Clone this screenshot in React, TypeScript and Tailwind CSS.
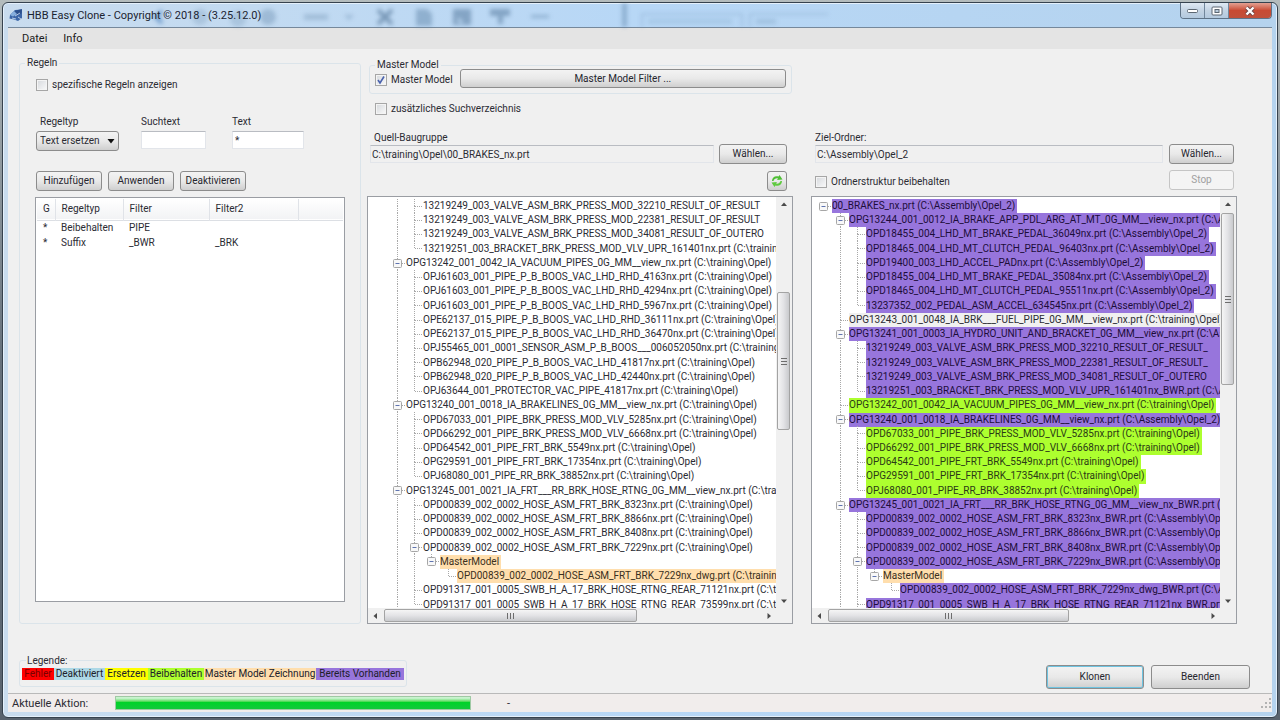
import React, { useState } from "react";

type Tone = "plain" | "purple" | "green" | "orange" | "gray";

/*
 * Guide characters, one per 17px indent cell:
 *   " " empty, "|" line passing through, "+" branch, "L" last branch,
 *   "B" expander with siblings below, "b" last expander, "r" root expander
 */
type Row = { guides: string; text: string; tone?: Tone; fill?: boolean };

const toneClass: Record<Tone, string> = {
  plain: "text-[#2b2b33]",
  purple: "bg-[#9775dc] text-[#1d0d3a]",
  green: "bg-[#adff2f] text-[#2b3a16]",
  orange: "bg-[#ffdead] text-[#3a2f20]",
  gray: "bg-[#f0f0f0] text-[#2b2b33]",
};

const sourceRows: Row[] = [
  { guides: "|+", text: "13219249_003_VALVE_ASM_BRK_PRESS_MOD_32210_RESULT_OF_RESULT" },
  { guides: "|+", text: "13219249_003_VALVE_ASM_BRK_PRESS_MOD_22381_RESULT_OF_RESULT" },
  { guides: "|+", text: "13219249_003_VALVE_ASM_BRK_PRESS_MOD_34081_RESULT_OF_OUTERO" },
  { guides: "|L", text: "13219251_003_BRACKET_BRK_PRESS_MOD_VLV_UPR_161401nx.prt (C:\\training\\Opel)" },
  { guides: "B", text: "OPG13242_001_0042_IA_VACUUM_PIPES_0G_MM__view_nx.prt (C:\\training\\Opel)" },
  { guides: "|+", text: "OPJ61603_001_PIPE_P_B_BOOS_VAC_LHD_RHD_4163nx.prt (C:\\training\\Opel)" },
  { guides: "|+", text: "OPJ61603_001_PIPE_P_B_BOOS_VAC_LHD_RHD_4294nx.prt (C:\\training\\Opel)" },
  { guides: "|+", text: "OPJ61603_001_PIPE_P_B_BOOS_VAC_LHD_RHD_5967nx.prt (C:\\training\\Opel)" },
  { guides: "|+", text: "OPE62137_015_PIPE_P_B_BOOS_VAC_LHD_RHD_36111nx.prt (C:\\training\\Opel)" },
  { guides: "|+", text: "OPE62137_015_PIPE_P_B_BOOS_VAC_LHD_RHD_36470nx.prt (C:\\training\\Opel)" },
  { guides: "|+", text: "OPJ55465_001_0001_SENSOR_ASM_P_B_BOOS___006052050nx.prt (C:\\training\\Opel)" },
  { guides: "|+", text: "OPB62948_020_PIPE_P_B_BOOS_VAC_LHD_41817nx.prt (C:\\training\\Opel)" },
  { guides: "|+", text: "OPB62948_020_PIPE_P_B_BOOS_VAC_LHD_42440nx.prt (C:\\training\\Opel)" },
  { guides: "|L", text: "OPJ63644_001_PROTECTOR_VAC_PIPE_41817nx.prt (C:\\training\\Opel)" },
  { guides: "B", text: "OPG13240_001_0018_IA_BRAKELINES_0G_MM__view_nx.prt (C:\\training\\Opel)" },
  { guides: "|+", text: "OPD67033_001_PIPE_BRK_PRESS_MOD_VLV_5285nx.prt (C:\\training\\Opel)" },
  { guides: "|+", text: "OPD66292_001_PIPE_BRK_PRESS_MOD_VLV_6668nx.prt (C:\\training\\Opel)" },
  { guides: "|+", text: "OPD64542_001_PIPE_FRT_BRK_5549nx.prt (C:\\training\\Opel)" },
  { guides: "|+", text: "OPG29591_001_PIPE_FRT_BRK_17354nx.prt (C:\\training\\Opel)" },
  { guides: "|L", text: "OPJ68080_001_PIPE_RR_BRK_38852nx.prt (C:\\training\\Opel)" },
  { guides: "B", text: "OPG13245_001_0021_IA_FRT___RR_BRK_HOSE_RTNG_0G_MM__view_nx.prt (C:\\training\\Opel)" },
  { guides: "|+", text: "OPD00839_002_0002_HOSE_ASM_FRT_BRK_8323nx.prt (C:\\training\\Opel)" },
  { guides: "|+", text: "OPD00839_002_0002_HOSE_ASM_FRT_BRK_8866nx.prt (C:\\training\\Opel)" },
  { guides: "|+", text: "OPD00839_002_0002_HOSE_ASM_FRT_BRK_8408nx.prt (C:\\training\\Opel)" },
  { guides: "|B", text: "OPD00839_002_0002_HOSE_ASM_FRT_BRK_7229nx.prt (C:\\training\\Opel)" },
  { guides: "||b", text: "MasterModel", tone: "orange" },
  { guides: "|| L", text: "OPD00839_002_0002_HOSE_ASM_FRT_BRK_7229nx_dwg.prt (C:\\training\\Opel)", tone: "orange" },
  { guides: "|+", text: "OPD91317_001_0005_SWB_H_A_17_BRK_HOSE_RTNG_REAR_71121nx.prt (C:\\training\\Opel)" },
  { guides: "|L", text: "OPD91317_001_0005_SWB_H_A_17_BRK_HOSE_RTNG_REAR_73599nx.prt (C:\\training\\Opel)" },
];

const targetRows: Row[] = [
  { guides: "r", text: "00_BRAKES_nx.prt (C:\\Assembly\\Opel_2)", tone: "purple" },
  { guides: " B", text: "OPG13244_001_0012_IA_BRAKE_APP_PDL_ARG_AT_MT_0G_MM__view_nx.prt (C:\\Assembly\\Opel_2)", tone: "purple" },
  { guides: " |+", text: "OPD18455_004_LHD_MT_BRAKE_PEDAL_36049nx.prt (C:\\Assembly\\Opel_2)", tone: "purple" },
  { guides: " |+", text: "OPD18465_004_LHD_MT_CLUTCH_PEDAL_96403nx.prt (C:\\Assembly\\Opel_2)", tone: "purple" },
  { guides: " |+", text: "OPD19400_003_LHD_ACCEL_PADnx.prt (C:\\Assembly\\Opel_2)", tone: "purple" },
  { guides: " |+", text: "OPD18455_004_LHD_MT_BRAKE_PEDAL_35084nx.prt (C:\\Assembly\\Opel_2)", tone: "purple" },
  { guides: " |+", text: "OPD18465_004_LHD_MT_CLUTCH_PEDAL_95511nx.prt (C:\\Assembly\\Opel_2)", tone: "purple" },
  { guides: " |L", text: "13237352_002_PEDAL_ASM_ACCEL_634545nx.prt (C:\\Assembly\\Opel_2)", tone: "purple" },
  { guides: " +", text: "OPG13243_001_0048_IA_BRK___FUEL_PIPE_0G_MM__view_nx.prt (C:\\training\\Opel)", tone: "gray" },
  { guides: " B", text: "OPG13241_001_0003_IA_HYDRO_UNIT_AND_BRACKET_0G_MM__view_nx.prt (C:\\Assembly\\Opel_2)", tone: "purple" },
  { guides: " |+", text: "13219249_003_VALVE_ASM_BRK_PRESS_MOD_32210_RESULT_OF_RESULT_", tone: "purple", fill: true },
  { guides: " |+", text: "13219249_003_VALVE_ASM_BRK_PRESS_MOD_22381_RESULT_OF_RESULT_", tone: "purple", fill: true },
  { guides: " |+", text: "13219249_003_VALVE_ASM_BRK_PRESS_MOD_34081_RESULT_OF_OUTERO", tone: "purple", fill: true },
  { guides: " |L", text: "13219251_003_BRACKET_BRK_PRESS_MOD_VLV_UPR_161401nx_BWR.prt (C:\\Assembly\\Opel_2)", tone: "purple" },
  { guides: " +", text: "OPG13242_001_0042_IA_VACUUM_PIPES_0G_MM__view_nx.prt (C:\\training\\Opel)", tone: "green" },
  { guides: " B", text: "OPG13240_001_0018_IA_BRAKELINES_0G_MM__view_nx.prt (C:\\Assembly\\Opel_2)", tone: "purple" },
  { guides: " |+", text: "OPD67033_001_PIPE_BRK_PRESS_MOD_VLV_5285nx.prt (C:\\training\\Opel)", tone: "green" },
  { guides: " |+", text: "OPD66292_001_PIPE_BRK_PRESS_MOD_VLV_6668nx.prt (C:\\training\\Opel)", tone: "green" },
  { guides: " |+", text: "OPD64542_001_PIPE_FRT_BRK_5549nx.prt (C:\\training\\Opel)", tone: "green" },
  { guides: " |+", text: "OPG29591_001_PIPE_FRT_BRK_17354nx.prt (C:\\training\\Opel)", tone: "green" },
  { guides: " |L", text: "OPJ68080_001_PIPE_RR_BRK_38852nx.prt (C:\\training\\Opel)", tone: "green" },
  { guides: " B", text: "OPG13245_001_0021_IA_FRT___RR_BRK_HOSE_RTNG_0G_MM__view_nx_BWR.prt (C:\\Assembly\\Opel_2)", tone: "purple" },
  { guides: " |+", text: "OPD00839_002_0002_HOSE_ASM_FRT_BRK_8323nx_BWR.prt (C:\\Assembly\\Opel_2)", tone: "purple" },
  { guides: " |+", text: "OPD00839_002_0002_HOSE_ASM_FRT_BRK_8866nx_BWR.prt (C:\\Assembly\\Opel_2)", tone: "purple" },
  { guides: " |+", text: "OPD00839_002_0002_HOSE_ASM_FRT_BRK_8408nx_BWR.prt (C:\\Assembly\\Opel_2)", tone: "purple" },
  { guides: " |B", text: "OPD00839_002_0002_HOSE_ASM_FRT_BRK_7229nx_BWR.prt (C:\\Assembly\\Opel_2)", tone: "purple" },
  { guides: " ||b", text: "MasterModel", tone: "orange" },
  { guides: " || L", text: "OPD00839_002_0002_HOSE_ASM_FRT_BRK_7229nx_dwg_BWR.prt (C:\\Assembly\\Opel_2)", tone: "purple" },
  { guides: " |+", text: "OPD91317_001_0005_SWB_H_A_17_BRK_HOSE_RTNG_REAR_71121nx_BWR.prt (C:\\Assembly\\Opel_2)", tone: "purple" },
];

function Guide({ kind }: { kind: string }) {
  const up = "|+LBb".includes(kind);
  const down = "|+B".includes(kind);
  const side = "+LBbr".includes(kind);
  const box = "Bbr".includes(kind);
  return (
    <svg width="17" height="15" viewBox="0 0 17 15" className="shrink-0" aria-hidden="true">
      <g stroke="#a9a9a9" strokeWidth="1" strokeDasharray="1 1">
        {up && <path d="M8.5 0V7" />}
        {down && <path d="M8.5 7V15" />}
        {side && <path d="M9 7.5H16" />}
      </g>
      {box && (
        <g>
          <rect x="4.500" y="3.500" width="8" height="8" rx="1" fill="#f8f8f8" stroke="#a6a6a6" />
          <path d="M6.500 7.500H10.500" stroke="#5f74b0" />
        </g>
      )}
    </svg>
  );
}

type Dir = "up" | "down" | "left" | "right";
const arrowPath: Record<Dir, string> = {
  up: "M1 6L4 2.5L7 6Z",
  down: "M1 2.5L4 6L7 2.5Z",
  left: "M6 1L2.5 4L6 7Z",
  right: "M2.5 1L6 4L2.5 7Z",
};

function ScrollArrow({ dir }: { dir: Dir }) {
  const label = { up: "Nach oben", down: "Nach unten", left: "Nach links", right: "Nach rechts" }[dir];
  return (
    <button type="button" aria-label={label} className="grid size-[14px] shrink-0 place-items-center">
      <svg width="8" height="8" viewBox="0 0 8 8">
        <path d={arrowPath[dir]} fill="#4a4a4a" />
      </svg>
    </button>
  );
}

function Tree({
  label,
  rows,
  className,
  vThumb,
  hThumb,
}: {
  label: string;
  rows: Row[];
  className: string;
  vThumb: string;
  hThumb: string;
}) {
  return (
    <div className="flex min-h-0 flex-1 flex-col border border-[#9a9da3] bg-[#f0f0f0]">
      <div className="flex min-h-0 flex-1">
        <div className="min-w-0 flex-1 overflow-hidden bg-white pt-[2px]">
          <ul aria-label={label} className={`flex h-[413px] flex-col ${className}`}>
            {rows.map((row, i) => (
              <li key={i} className="flex min-h-0 flex-1 items-center whitespace-nowrap">
                {row.guides.split("").map((g, j) => (
                  <Guide key={j} kind={g} />
                ))}
                <span
                  className={`h-full pr-[2px] leading-[14px] ${row.fill ? "grow" : ""} ${toneClass[row.tone ?? "plain"]}`}
                >
                  {row.text}
                </span>
              </li>
            ))}
          </ul>
        </div>
        <div className="flex w-4 flex-col items-center">
          <ScrollArrow dir="up" />
          <div className="flex min-h-0 flex-1 flex-col self-stretch pr-[2px] pl-px">
            <div
              className={`grid place-items-center rounded-[2px] border border-[#a3a3a3] bg-linear-to-r from-[#f5f5f5] via-[#e3e3e6] to-[#c9cacd] ${vThumb}`}
            >
              <svg width="6" height="7" viewBox="0 0 6 7">
                <path d="M0 .5H6M0 3.5H6M0 6.5H6" stroke="#6d6d6d" />
              </svg>
            </div>
          </div>
          <ScrollArrow dir="down" />
        </div>
      </div>
      <div className="flex h-[15px] items-center pr-4">
        <ScrollArrow dir="left" />
        <div className="flex min-w-0 flex-1 self-stretch py-px">
          <div
            className={`grid place-items-center rounded-[2px] border border-[#a3a3a3] bg-linear-to-b from-[#f5f5f5] via-[#e3e3e6] to-[#c9cacd] ${hThumb}`}
          >
            <svg width="7" height="6" viewBox="0 0 7 6">
              <path d="M.5 0V6M3.5 0V6M6.5 0V6" stroke="#6d6d6d" />
            </svg>
          </div>
        </div>
        <ScrollArrow dir="right" />
      </div>
    </div>
  );
}

function PushButton({ className = "", ...props }: React.ComponentProps<"button">) {
  return (
    <button
      type="button"
      className={`rounded-[3px] border border-[#8c8c8c] bg-linear-to-b from-[#f3f3f3] via-[#e9e9e9] to-[#cfcfcf] text-center text-[#26262e] disabled:border-[#c5c5c5] disabled:from-[#f4f4f4] disabled:via-[#f4f4f4] disabled:to-[#f4f4f4] disabled:text-[#a0a0a0] ${className}`}
      {...props}
    />
  );
}

function CheckBox({ label, initial = false }: { label: string; initial?: boolean }) {
  const [on, setOn] = useState(initial);
  return (
    <label className="flex items-center gap-1">
      <span className="grid size-3 place-items-center">
        <input
          type="checkbox"
          checked={on}
          onChange={(e) => setOn(e.target.checked)}
          className="col-start-1 row-start-1 size-3 appearance-none border border-[#a6a6a6] bg-linear-to-br from-[#d5d8dc] to-[#fafafa] shadow-[inset_0_0_0_1px_#f4f4f4]"
        />
        {on && (
          <svg width="10" height="10" viewBox="0 0 10 10" className="pointer-events-none col-start-1 row-start-1">
            <path d="M2 5L4 8L8 1.5" fill="none" stroke="#4a62ad" strokeWidth="1.600" />
          </svg>
        )}
      </span>
      <span>{label}</span>
    </label>
  );
}

const sunken = "border border-[#e2e5ea] border-t-[#b9bcc2] outline-none";

function RuleTable() {
  const rules = [
    ["*", "Beibehalten", "PIPE", ""],
    ["*", "Suffix", "_BWR", "_BRK"],
  ];
  const head = "border-r border-[#e0e3e8] pl-[6px] text-left font-normal";
  return (
    <div className="min-h-0 flex-1 border border-[#9a9da3] bg-white p-px">
      <table className="w-full table-fixed border-collapse">
        <colgroup>
          <col className="w-[18px]" />
          <col className="w-[68px]" />
          <col className="w-[86px]" />
          <col className="w-[89px]" />
          <col />
        </colgroup>
        <thead>
          <tr className="h-[21px] border-b border-[#dcdfe4] bg-linear-to-b from-white to-[#f2f3f5]">
            <th className={head}>G</th>
            <th className={head}>Regeltyp</th>
            <th className={head}>Filter</th>
            <th className={head}>Filter2</th>
            <td />
          </tr>
        </thead>
        <tbody>
          {rules.map((r, i) => (
            <tr key={i} className="h-[15px]">
              {r.map((c, j) => (
                <td key={j} className="pl-[6px]">
                  {c}
                </td>
              ))}
            </tr>
          ))}
        </tbody>
      </table>
    </div>
  );
}

function TitleBar() {
  return (
    <header className="relative flex h-6 items-center">
      <svg
        className="pointer-events-none absolute inset-0 h-full w-full blur-[2px]"
        viewBox="0 0 1264 24"
        preserveAspectRatio="xMinYMin slice"
        aria-hidden="true"
      >
        <g fill="#5f83a6" opacity=".6">
          <path d="M154 8l-6 6 6 6" fill="none" stroke="#3f78b8" strokeWidth="4" />
          <circle cx="192" cy="14" r="8" opacity=".4" />
          <circle cx="230" cy="16" r="8" opacity=".4" />
          <circle cx="260" cy="14" r="8" opacity=".6" />
          <rect x="296" y="11" width="24" height="6" opacity=".5" />
          <path d="M336 12h10l-5 5z" opacity=".6" />
          <path d="M370 7l14 14M384 7l-14 14" stroke="#4c6f92" strokeWidth="4" />
          <path d="M408 6h11l5 5v12h-16z" opacity=".8" />
          <path d="M445 6h18v16h-18zM450 14v6h6z" fillRule="evenodd" />
          <path d="M482 6h20v7h-7v8h-5v-8h-8z" />
          <rect x="523" y="12" width="18" height="3" opacity=".8" />
          <rect x="614" y="0" width="5" height="24" opacity=".8" />
          <path d="M634 24V11H734V24M742 24V11H820" fill="none" stroke="#7fa0c0" strokeWidth="2" opacity=".6" />
          <rect x="640" y="16" width="84" height="5" opacity=".3" />
          <rect x="748" y="16" width="20" height="5" opacity=".4" />
        </g>
      </svg>
      <div className="relative flex flex-1 items-center gap-1 pl-px">
        <svg width="14" height="14" viewBox="0 0 14 14" aria-hidden="true">
          <path d="M1 7L6 2L13 1.500V10L9 13L5 11.500L0.500 10.500Z" fill="#3c66a8" />
          <path d="M5 3L13 1L12.500 5.500L7 7Z" fill="#2c4f8c" />
          <path d="M1 7L5 3L8 6L4 8.500Z" fill="#86aedd" />
          <path d="M3 10L7 11M9 9L12 11M6 8L11 5" stroke="#d8e6f7" strokeWidth=".8" />
        </svg>
        <h1 className="pt-px text-[11px] leading-4 text-[#1b2430]">HBB Easy Clone - Copyright © 2018 - (3.25.12.0)</h1>
      </div>
      <div className="relative flex h-4 self-start overflow-hidden rounded-b-[4px] border border-t-0 border-[#5f7387]">
        <button
          type="button"
          aria-label="Minimieren"
          className="grid w-6 place-items-center border-r border-[#71869b] bg-linear-to-b from-[#dfe9f3] via-[#c3d3e3] to-[#b3c9de]"
        >
          <svg width="12" height="6" viewBox="0 0 12 6">
            <rect x=".5" y="1.500" width="10" height="3" rx="1" fill="#fff" stroke="#5c6772" />
          </svg>
        </button>
        <button
          type="button"
          aria-label="Maximieren"
          className="grid w-6 place-items-center border-r border-[#71869b] bg-linear-to-b from-[#dfe9f3] via-[#c3d3e3] to-[#b3c9de]"
        >
          <svg width="12" height="10" viewBox="0 0 12 10">
            <rect x="1" y="1" width="10" height="8" rx="1" fill="#fff" stroke="#5c6772" />
            <rect x="4" y="3.500" width="4" height="3" fill="#b9cbdc" stroke="#5c6772" />
          </svg>
        </button>
        <button
          type="button"
          aria-label="Schließen"
          className="grid w-[42px] place-items-center bg-linear-to-b from-[#e2a092] via-[#c84a33] to-[#c0503a]"
        >
          <svg width="12" height="10" viewBox="0 0 12 10">
            <path d="M2.500 1.500L9.500 8.500M9.500 1.500L2.500 8.500" stroke="#6b4444" strokeWidth="4" />
            <path d="M2.500 1.500L9.500 8.500M9.500 1.500L2.500 8.500" stroke="#fff" strokeWidth="2.400" />
          </svg>
        </button>
      </div>
    </header>
  );
}

const group = "min-w-0 rounded-[3px] border border-[#dbe4ea]";

export default function App() {
  const [search, setSearch] = useState("");
  const [text, setText] = useState("*");
  return (
    <div className="flex h-screen flex-col bg-linear-to-b from-[#b4bcbd] via-[#66717c] to-[#59636e] p-[2px] font-['Roboto',sans-serif] text-[10px] leading-3 text-[#2b2b33]">
      <div className="flex min-h-0 flex-1 flex-col overflow-hidden rounded-[6px] border border-[#36424e] bg-linear-to-r from-[#c9dcee] via-[#b7d7f6] to-[#b5d3ee] px-[5px] pb-[5px] shadow-[inset_0_0_0_1px_#e4f0fb]">
        <TitleBar />
        <div className="flex min-h-0 flex-1 flex-col border-t border-[#75889b] bg-[#f0f0f0]">
          <nav
            aria-label="Hauptmenü"
            className="flex h-[21px] items-center gap-4 bg-[#e4e4e4] pt-px pl-[14px] text-[11px] text-[#1b1b20]"
          >
            <button type="button">Datei</button>
            <button type="button">Info</button>
          </nav>

          <main className="flex min-h-0 flex-1 gap-[6px] pr-[35px] pl-[11px]">
            <section className="flex w-[342px] shrink-0 flex-col pt-[7px]">
              <fieldset className={`flex min-h-0 flex-1 flex-col px-[15px] pt-[9px] pb-[21px] ${group}`}>
                <legend className="-ml-[10px] h-[14px] px-[2px] leading-[14px]">Regeln</legend>
                <div className="pl-px">
                  <CheckBox label="spezifische Regeln anzeigen" />
                </div>
                <div className="flex gap-[26px] pt-[25px] pl-px">
                  <div className="-mr-1 flex w-[83px] flex-col gap-[3px]">
                    <label htmlFor="regeltyp" className="pl-1">
                      Regeltyp
                    </label>
                    <span className="relative flex">
                      <select
                        id="regeltyp"
                        className="h-5 w-full appearance-none rounded-[3px] border border-[#8c8c8c] bg-linear-to-b from-[#f3f3f3] via-[#e9e9e9] to-[#cfcfcf] pl-[3px]"
                      >
                        <option>Text ersetzen</option>
                        <option>Beibehalten</option>
                        <option>Suffix</option>
                      </select>
                      <svg
                        width="8"
                        height="5"
                        viewBox="0 0 8 5"
                        className="pointer-events-none absolute top-2 right-1"
                        aria-hidden="true"
                      >
                        <path d="M.5 0H7.500L4 4.500Z" fill="#111" />
                      </svg>
                    </span>
                  </div>
                  <div className="flex w-[65px] flex-col gap-[3px]">
                    <label htmlFor="suchtext">Suchtext</label>
                    <input
                      id="suchtext"
                      value={search}
                      onChange={(e) => setSearch(e.target.value)}
                      className={`h-[18px] w-full bg-white px-[2px] ${sunken}`}
                    />
                  </div>
                  <div className="flex w-[72px] flex-col gap-[3px]">
                    <label htmlFor="text">Text</label>
                    <input
                      id="text"
                      value={text}
                      onChange={(e) => setText(e.target.value)}
                      className={`h-[18px] w-full bg-white px-[2px] ${sunken}`}
                    />
                  </div>
                </div>
                <div className="grid w-[211px] grid-cols-3 gap-[6px] pt-5 pb-[6px] pl-px">
                  <PushButton className="h-5">Hinzufügen</PushButton>
                  <PushButton className="h-5">Anwenden</PushButton>
                  <PushButton className="h-5">Deaktivieren</PushButton>
                </div>
                <RuleTable />
              </fieldset>
            </section>

            <div className="grid min-h-0 min-w-0 flex-1 grid-cols-2 gap-[18px]">
              <section className="flex min-h-0 min-w-0 flex-col">
                <fieldset className={`mt-3 mr-px ml-[2px] px-[5px] pb-[5px] ${group}`}>
                  <legend className="h-2 px-[2px] leading-2">Master Model</legend>
                  <div className="flex items-center gap-[7px]">
                    <div className="pt-[3px]">
                      <CheckBox label="Master Model" initial />
                    </div>
                    <PushButton className="h-[19px] flex-1">Master Model Filter ...</PushButton>
                  </div>
                </fieldset>
                <div className="pt-[9px] pl-2">
                  <CheckBox label="zusätzliches Suchverzeichnis" />
                </div>
                <label htmlFor="quelle" className="pt-[17px] pl-[7px]">
                  Quell-Baugruppe
                </label>
                <div className="flex items-center gap-[5px] pr-[6px] pl-[3px]">
                  <input
                    id="quelle"
                    readOnly
                    value="C:\training\Opel\00_BRAKES_nx.prt"
                    className={`h-[18px] min-w-0 flex-1 bg-[#f0f0f0] px-px ${sunken}`}
                  />
                  <PushButton className="h-5 w-[68px]">Wählen...</PushButton>
                </div>
                <div className="flex justify-end pt-[7px] pr-[6px] pb-[5px]">
                  <PushButton aria-label="Aktualisieren" className="grid size-5 place-items-center">
                    <svg width="14" height="14" viewBox="0 0 14 14">
                      <path d="M2 7C2 3.500 5 1.500 8.500 2.500L9.500 1L12.500 5.500L7 6L8 4.500C6 4 4 5 3.500 7Z" fill="#4fbf35" />
                      <path d="M12 7C12 10.500 9 12.500 5.500 11.500L4.500 13L1.500 8.500L7 8L6 9.500C8 10 10 9 10.500 7Z" fill="#5fca3f" />
                    </svg>
                  </PushButton>
                </div>
                <Tree
                  label="Quell-Baugruppe"
                  rows={sourceRows}
                  className="pl-[21px]"
                  vThumb="mt-[81px] h-[138px]"
                  hThumb="ml-[2px] w-[253px]"
                />
              </section>

              <section className="flex min-h-0 min-w-0 flex-col pt-[83px]">
                <label htmlFor="ziel" className="pl-1">
                  Ziel-Ordner:
                </label>
                <div className="flex items-center gap-[6px] pr-[3px] pl-1">
                  <input
                    id="ziel"
                    readOnly
                    value="C:\Assembly\Opel_2"
                    className={`h-[18px] min-w-0 flex-1 bg-[#f0f0f0] px-px ${sunken}`}
                  />
                  <PushButton className="h-5 w-[65px]">Wählen...</PushButton>
                </div>
                <div className="flex items-center justify-between pt-[6px] pr-[3px] pb-[6px] pl-1">
                  <div className="pt-[3px]">
                    <CheckBox label="Ordnerstruktur beibehalten" />
                  </div>
                  <PushButton disabled className="h-5 w-[65px]">
                    Stop
                  </PushButton>
                </div>
                <Tree
                  label="Ziel-Ordner"
                  rows={targetRows}
                  className="pl-[3px]"
                  vThumb="mt-[2px] h-[172px]"
                  hThumb="ml-[2px] w-[241px]"
                />
              </section>
            </div>
          </main>

          <footer className="flex h-[69px] shrink-0 items-start justify-between pr-[22px] pl-[11px]">
            <fieldset className={`mt-[31px] px-[2px] pt-[2px] pb-[6px] ${group}`}>
              <legend className="ml-1 h-[11px] px-px leading-[11px]">Legende:</legend>
              <div className="grid grid-cols-[32px_51px_43px_56px_112px_88px] text-center whitespace-nowrap text-[#20202a]">
                <span className="bg-[#ff0000] text-[#7a0000]">Fehler</span>
                <span className="bg-[#add8e6]">Deaktiviert</span>
                <span className="bg-[#ffff00]">Ersetzen</span>
                <span className="bg-[#adff2f]">Beibehalten</span>
                <span className="bg-[#ffdead]">Master Model Zeichnung</span>
                <span className="bg-[#9775dc]">Bereits Vorhanden</span>
              </div>
            </fieldset>
            <div className="mt-[41px] flex gap-[7px]">
              <PushButton className="h-6 w-[98px] border-[#3c8fb0] shadow-[inset_0_0_0_1px_#6ec3e0]">Klonen</PushButton>
              <PushButton className="h-6 w-[99px]">Beenden</PushButton>
            </div>
          </footer>

          <div className="flex h-[19px] shrink-0 items-center border-t border-[#b9b9b9] bg-[#f1edec] pl-1 text-[11px]">
            <span className="w-[103px] pt-px">Aktuelle Aktion:</span>
            <div
              role="progressbar"
              aria-label="Fortschritt"
              aria-valuenow={100}
              className="h-[14px] w-[356px] border border-[#9fc9a4] bg-linear-to-b from-[#c9f3cf] from-10% via-[#00d328] via-45% to-[#12c93a]"
            />
            <span className="pt-px pl-9">-</span>
            <svg width="11" height="11" viewBox="0 0 11 11" className="ml-auto" aria-hidden="true">
              <path
                d="M8 0h2v2h-2zM8 4h2v2h-2zM8 8h2v2h-2zM4 4h2v2h-2zM4 8h2v2h-2zM0 8h2v2h-2z"
                fill="#b3b3b3"
              />
            </svg>
          </div>
        </div>
      </div>
    </div>
  );
}
